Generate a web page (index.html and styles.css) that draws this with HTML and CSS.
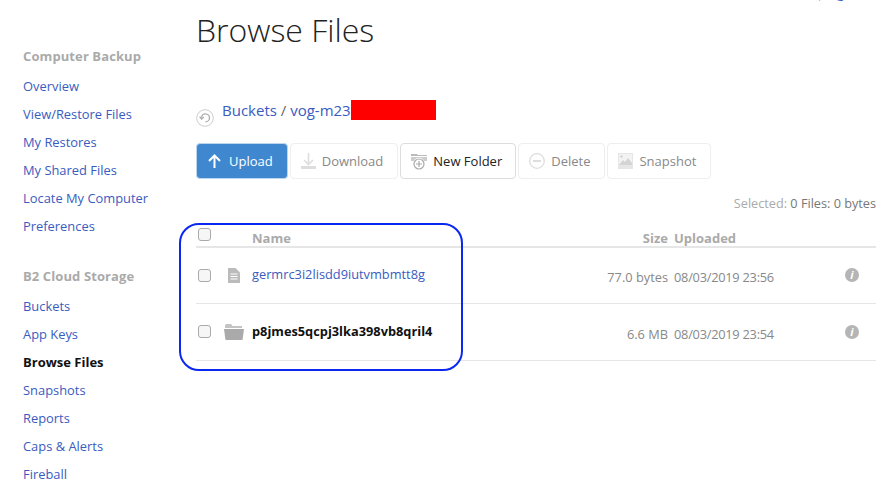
FILE: index.html
```html
<!DOCTYPE html>
<html lang="en">
<head>
  <meta charset="UTF-8" />
  <title>Browse Files</title>
  <link rel="stylesheet" href="styles.css">
</head>
<body>
  <div class="page">
    <nav class="sidebar">
      <h4>Computer Backup</h4>
      <ul>
        <li><a href="#">Overview</a></li>
        <li><a href="#">View/Restore Files</a></li>
        <li><a href="#">My Restores</a></li>
        <li><a href="#">My Shared Files</a></li>
        <li><a href="#">Locate My Computer</a></li>
        <li><a href="#">Preferences</a></li>
      </ul>
      <h4>B2 Cloud Storage</h4>
      <ul>
        <li><a href="#">Buckets</a></li>
        <li><a href="#">App Keys</a></li>
        <li class="current">Browse Files</li>
        <li><a href="#">Snapshots</a></li>
        <li><a href="#">Reports</a></li>
        <li><a href="#">Caps &amp; Alerts</a></li>
        <li><a href="#">Fireball</a></li>
      </ul>
    </nav>

    <main class="content">
      <div class="top-link"><span>|</span> <a href="#">Sign</a></div>
      <h1>Browse Files</h1>

      <div class="crumbs">
        <svg class="back-icon" width="18" height="18" viewBox="0 0 18 18" fill="none" stroke="#aaa">
          <circle cx="9" cy="9" r="8.300" stroke="#ccc" stroke-width="1"/>
          <path d="M5.500 8.500 A4 4 0 1 1 9.500 12.800" stroke-width="1.300"/>
          <path d="M3.600 7.600 L5.600 10 L7.800 8" stroke-width="1.300"/>
        </svg>
        <div class="crumb-text"><a href="#">Buckets</a> / <a href="#">vog-m23</a><span class="redacted"></span></div>
      </div>

      <div class="toolbar">
        <button class="btn primary">
          <svg width="13" height="14" viewBox="0 0 13 14" fill="none" stroke="#fff" stroke-width="2"><path d="M6.500 14V2M1 7l5.500-5.500L12 7"/></svg>
          Upload
        </button>
        <button class="btn off">
          <svg width="15" height="16" viewBox="0 0 15 16" fill="none" stroke="#ddd" stroke-width="1.600"><path d="M7.500 0v11M3 7l4.500 4.500L12 7"/><path d="M0 14.500h15" stroke-width="3"/></svg>
          Download
        </button>
        <button class="btn">
          <svg width="16" height="17" viewBox="0 0 16 17"><path d="M0 3V1h6l1 1h9v1z" fill="#bbb"/><path d="M0 4h16v4h-3A5.500 5.500 0 0 0 3 8H0z" fill="#ccc"/><circle cx="8" cy="11" r="5" fill="#fff" stroke="#aaa" stroke-width="1.200"/><path d="M8 8v6M5 11h6" stroke="#aaa" stroke-width="1.200"/></svg>
          New Folder
        </button>
        <button class="btn off">
          <svg width="16" height="16" viewBox="0 0 16 16" fill="none" stroke="#ddd"><circle cx="8" cy="8" r="7.300" stroke-width="1.300"/><path d="M4 8h8" stroke-width="2"/></svg>
          Delete
        </button>
        <button class="btn off">
          <svg width="15" height="16" viewBox="0 0 15 16"><rect width="15" height="16" fill="#e6e6e6"/><rect x="1" y="1" width="13" height="11" fill="#f3f3f3"/><path d="M1 12l4-5 2 2 3-4 4 5v2z" fill="#d4d4d4"/><circle cx="3.500" cy="3.500" r="1.200" fill="#d4d4d4"/></svg>
          Snapshot
        </button>
      </div>

      <p class="selected">Selected: <span>0 Files: 0 bytes</span></p>

      <table class="files">
        <thead>
          <tr>
            <th class="col-check"><input type="checkbox"></th>
            <th class="col-icon"></th>
            <th class="col-name">Name</th>
            <th class="col-size">Size</th>
            <th class="col-date">Uploaded</th>
            <th class="col-info"></th>
          </tr>
        </thead>
        <tbody>
          <tr>
            <td class="col-check"><input type="checkbox"></td>
            <td class="col-icon">
              <svg class="doc-icon" width="12" height="15" viewBox="0 0 12 15"><path d="M0 0h7.500L12 4.500V15H0z" fill="#bbb"/><path d="M2.500 6h7M2.500 8.500h7M2.500 11h7" stroke="#fff" stroke-width="1"/></svg>
            </td>
            <td class="col-name"><a href="#">germrc3i2lisdd9iutvmbmtt8g</a></td>
            <td class="col-size">77.0 bytes</td>
            <td class="col-date">08/03/2019 23:56</td>
            <td class="col-info"><span class="info">i</span></td>
          </tr>
          <tr>
            <td class="col-check"><input type="checkbox"></td>
            <td class="col-icon">
              <svg class="folder-icon" width="20" height="16" viewBox="0 0 20 16"><path d="M1 4V1.500L2 0h5l1.500 2H18v2z" fill="#c4c4c4"/><path d="M0 5h20l-1.500 11H1.500z" fill="#aaa"/></svg>
            </td>
            <td class="col-name folder">p8jmes5qcpj3lka398vb8qril4</td>
            <td class="col-size">6.6 MB</td>
            <td class="col-date">08/03/2019 23:54</td>
            <td class="col-info"><span class="info">i</span></td>
          </tr>
        </tbody>
      </table>

      <div class="callout"></div>
    </main>
  </div>
</body>
</html>
```

FILE: styles.css
```css
* {
  box-sizing: border-box;
}

html, body {
  height: 100%;
}

body {
  margin: 0;
  overflow: hidden;
  background: #fff;
  color: #888;
  font-family: "Open Sans", sans-serif;
  font-size: 13px;
}

a {
  color: #3a5bc0;
  text-decoration: none;
}

.page {
  display: flex;
  height: 485px;
}

/* left nav */
.sidebar {
  width: 196px;
  flex: none;
  padding: 47px 0 0 23px;
}

.sidebar h4 {
  margin: 0;
  height: 18px;
  line-height: 18px;
  font-size: 13px;
  font-weight: 700;
  letter-spacing: 0.1px;
  color: #aaa;
}

.sidebar ul {
  list-style: none;
  margin: 7px 0 27px;
  padding: 0;
}

.sidebar li {
  height: 28px;
  line-height: 28px;
  font-size: 12.9px;
}

.sidebar li.current {
  font-size: 13px;
  font-weight: 700;
  color: #111;
}

/* main column */
.content {
  position: relative;
  flex: 1;
  padding-right: 6px;
}

.top-link {
  position: absolute;
  top: -16px;
  right: 30px;
  font-size: 13px;
  color: #aaa;
}

h1 {
  margin: 0;
  padding-top: 8px;
  height: 100px;
  font-size: 32px;
  line-height: 44px;
  font-weight: 300;
  color: #222;
}

.crumbs {
  display: flex;
  align-items: flex-start;
  gap: 8px;
  height: 43px;
}

.back-icon {
  margin-top: 9px;
}

.crumb-text {
  display: flex;
  font-size: 15px;
  line-height: 20px;
  color: #666;
  white-space: pre;
}

.redacted {
  width: 85px;
  height: 20px;
  background: #f00;
}

.toolbar {
  display: flex;
  gap: 2px;
}

.btn {
  display: flex;
  align-items: center;
  gap: 6px;
  height: 36px;
  padding: 0 13px 0 10px;
  border: 1px solid #ddd;
  border-radius: 4px;
  background: #fff;
  color: #222;
  font: 13px "Open Sans", sans-serif;
}

.btn.primary {
  gap: 8px;
  padding: 0 14px 0 11px;
  background: #3f88d0;
  border-color: #bcd5ee;
  color: #fff;
}

.btn.off {
  padding-right: 14px;
  border-color: #eee;
  color: #888;
}

.selected {
  margin: 14px 0 0;
  height: 20px;
  line-height: 20px;
  font-size: 12.7px;
  text-align: right;
  color: #aaa;
}

.selected span {
  color: #777;
}

/* file table */
.files {
  width: 100%;
  margin-top: 10px;
  border-collapse: collapse;
  table-layout: fixed;
}

.files th {
  height: 24px;
  padding: 0;
  text-align: left;
  font-weight: 700;
  color: #aaa;
  border-bottom: 2px solid #e6e6e6;
  vertical-align: bottom;
  line-height: 16px;
}

.files th.col-check {
  vertical-align: top;
  padding-top: 5px;
}

.files td {
  height: 56px;
  padding: 0;
  border-bottom: 1px solid #e6e6e6;
}

.files tr + tr td {
  height: 57px;
}

.files td.col-name {
  padding-bottom: 2px;
  font-size: 12.8px;
}

.files td.col-size,
.files td.col-date {
  padding-top: 3px;
  font-size: 12.8px;
}

.files tr + tr td.col-size,
.files tr + tr td.col-date {
  padding-top: 4px;
}

.col-check {
  width: 32px;
}

.col-icon {
  width: 24px;
}

.col-name {
  width: 310px;
}

.col-size {
  width: 106px;
  text-align: right !important;
}

.col-date {
  padding-left: 6px !important;
  width: 170px;
}

.files td.col-date {
  letter-spacing: -0.25px;
}

.col-info {
  text-align: right;
  padding-right: 17px !important;
  padding-bottom: 2px !important;
}

input[type="checkbox"] {
  appearance: none;
  display: block;
  width: 13px;
  height: 13px;
  margin: 0 0 0 2px;
  border: 1px solid #aaa;
  border-radius: 3px;
  background: #f6f6f6;
}

.doc-icon,
.folder-icon {
  display: block;
}

.folder-icon {
  margin-left: -4px;
}

.folder {
  font-weight: 700;
  color: #111;
}

.info {
  display: inline-block;
  width: 14px;
  height: 14px;
  border-radius: 50%;
  background: #b5b5b5;
  color: #fff;
  font-size: 11px;
  font-weight: 700;
  font-style: italic;
  line-height: 14px;
  text-align: center;
}

/* hand-drawn highlight box from the screenshot */
.callout {
  position: absolute;
  left: -17px;
  top: 223px;
  width: 284px;
  height: 148px;
  border: 2px solid #0a28f0;
  border-radius: 20px;
}
```
